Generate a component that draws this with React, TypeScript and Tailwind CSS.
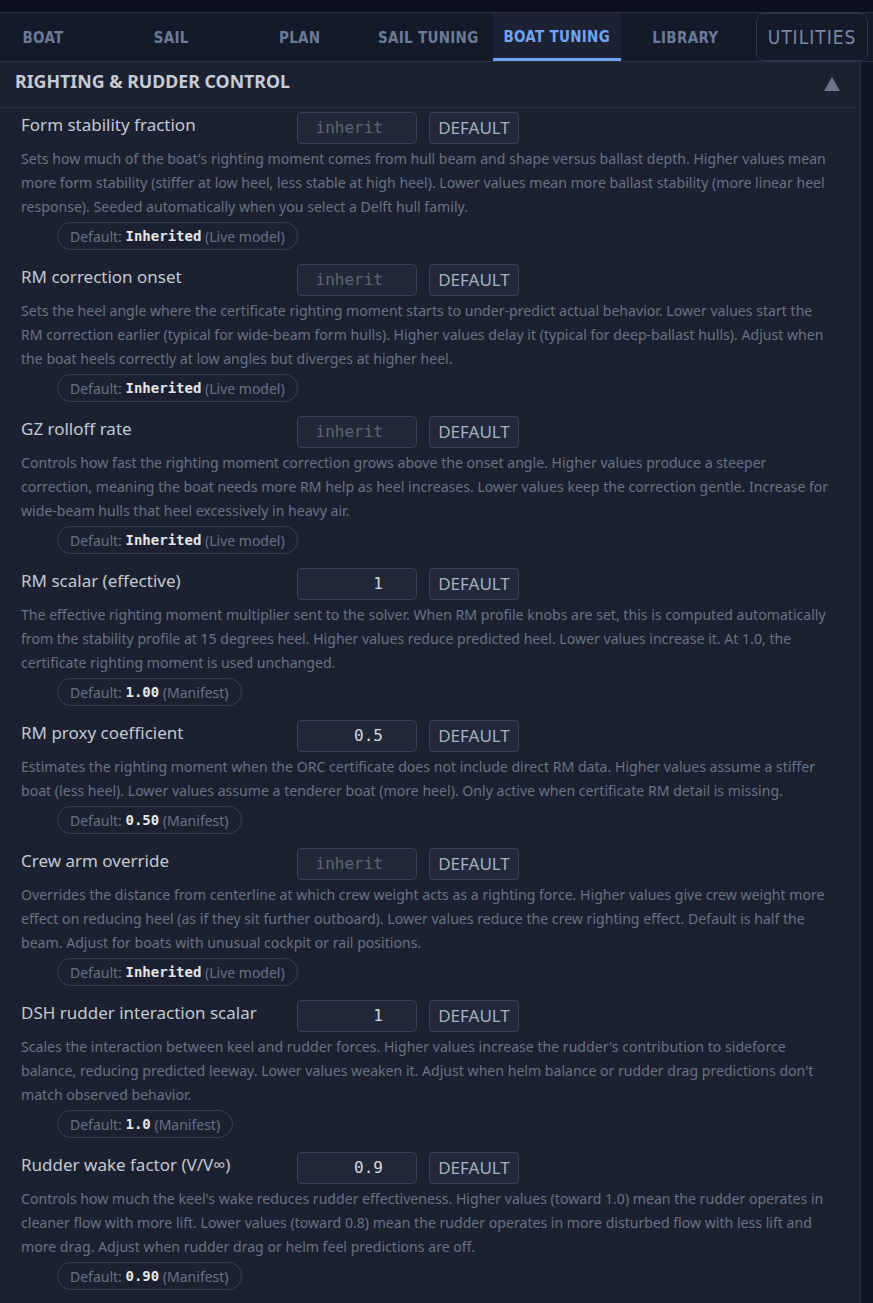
import React from "react";

type Item = {
  label: string;
  value: string;
  placeholder?: boolean;
  desc: string;
  def: string;
  source: string;
};

const items: Item[] = [
  {
    label: "Form stability fraction",
    value: "inherit",
    placeholder: true,
    desc: "Sets how much of the boat's righting moment comes from hull beam and shape versus ballast depth. Higher values mean more form stability (stiffer at low heel, less stable at high heel). Lower values mean more ballast stability (more linear heel response). Seeded automatically when you select a Delft hull family.",
    def: "Inherited",
    source: "(Live model)",
  },
  {
    label: "RM correction onset",
    value: "inherit",
    placeholder: true,
    desc: "Sets the heel angle where the certificate righting moment starts to under-predict actual behavior. Lower values start the RM correction earlier (typical for wide-beam form hulls). Higher values delay it (typical for deep-ballast hulls). Adjust when the boat heels correctly at low angles but diverges at higher heel.",
    def: "Inherited",
    source: "(Live model)",
  },
  {
    label: "GZ rolloff rate",
    value: "inherit",
    placeholder: true,
    desc: "Controls how fast the righting moment correction grows above the onset angle. Higher values produce a steeper correction, meaning the boat needs more RM help as heel increases. Lower values keep the correction gentle. Increase for wide-beam hulls that heel excessively in heavy air.",
    def: "Inherited",
    source: "(Live model)",
  },
  {
    label: "RM scalar (effective)",
    value: "1",
    desc: "The effective righting moment multiplier sent to the solver. When RM profile knobs are set, this is computed automatically from the stability profile at 15 degrees heel. Higher values reduce predicted heel. Lower values increase it. At 1.0, the certificate righting moment is used unchanged.",
    def: "1.00",
    source: "(Manifest)",
  },
  {
    label: "RM proxy coefficient",
    value: "0.5",
    desc: "Estimates the righting moment when the ORC certificate does not include direct RM data. Higher values assume a stiffer boat (less heel). Lower values assume a tenderer boat (more heel). Only active when certificate RM detail is missing.",
    def: "0.50",
    source: "(Manifest)",
  },
  {
    label: "Crew arm override",
    value: "inherit",
    placeholder: true,
    desc: "Overrides the distance from centerline at which crew weight acts as a righting force. Higher values give crew weight more effect on reducing heel (as if they sit further outboard). Lower values reduce the crew righting effect. Default is half the beam. Adjust for boats with unusual cockpit or rail positions.",
    def: "Inherited",
    source: "(Live model)",
  },
  {
    label: "DSH rudder interaction scalar",
    value: "1",
    desc: "Scales the interaction between keel and rudder forces. Higher values increase the rudder's contribution to sideforce balance, reducing predicted leeway. Lower values weaken it. Adjust when helm balance or rudder drag predictions don't match observed behavior.",
    def: "1.0",
    source: "(Manifest)",
  },
  {
    label: "Rudder wake factor (V/V∞)",
    value: "0.9",
    desc: "Controls how much the keel's wake reduces rudder effectiveness. Higher values (toward 1.0) mean the rudder operates in cleaner flow with more lift. Lower values (toward 0.8) mean the rudder operates in more disturbed flow with less lift and more drag. Adjust when rudder drag or helm feel predictions are off.",
    def: "0.90",
    source: "(Manifest)",
  },
];

const tabs = ["BOAT", "SAIL", "PLAN", "SAIL TUNING", "BOAT TUNING", "LIBRARY"];

const sans = "font-['Noto_Sans','Open_Sans',sans-serif]";
const mono = "font-['DejaVu_Sans_Mono','Liberation_Mono',monospace]";
const cond = "font-['DejaVu_Sans_Condensed','Roboto',sans-serif]";

function Setting({ item }: { item: Item }) {
  return (
    <div className="pl-[21px] pr-[29px] mb-[14px]">
      {/* 标签 + 输入 */}
      <div className="flex items-center h-[32px]">
        <div className="w-[276px] text-[17px] text-[#c3c8d2] -mt-[6px] whitespace-nowrap">{item.label}</div>
        <div
          className={`w-[120px] h-[32px] rounded-[4px] border border-[#394154] bg-[#212838] flex items-center justify-end pr-[33px] text-[16px] ${mono} ${
            item.placeholder ? "text-[#5d6679]" : "text-[#d5d9e0]"
          }`}
        >
          {item.value}
        </div>
        <button className="ml-[12px] w-[90px] h-[32px] rounded-[4px] border border-[#394154] bg-[#222939] text-[17px] text-[#a7b0c1] flex items-center justify-center">
          DEFAULT
        </button>
      </div>

      {/* 说明 */}
      <p className="mt-[3px] text-[14.1px] leading-[24px] text-[#697285]">{item.desc}</p>

      {/* 默认值 */}
      <div className="mt-[3px] ml-[36px] inline-flex items-center h-[28px] px-[12px] rounded-full border border-[#353d4f] text-[14px] text-[#697285]">
        Default:&nbsp;<span className={`${mono} font-semibold text-[14px] text-[#e3e6eb]`}>{item.def}</span>&nbsp;{item.source}
      </div>
    </div>
  );
}

export default function App() {
  return (
    <div className={`min-h-screen bg-[#0b0f1e] ${sans}`}>
      <div className="h-[12px] bg-[#0b0f1e]" />

      {/* 标签栏 */}
      <div className="flex h-[50px] border-t border-b border-[#2c3345] bg-[#131a2a]">
        {tabs.map((t, i) => {
          const active = t === "BOAT TUNING";
          return (
            <div
              key={t}
              className={`${i === 0 ? "w-[107px] pr-[21px]" : "w-[128.5px]"} h-full flex items-center justify-center text-[15px] font-bold tracking-[0.3px] ${cond} ${
                active
                  ? "bg-[#1c2233] text-[#6fa3f3] border-b-[3px] border-[#6fa3f3] pt-[4px]"
                  : "text-[#6b7a95] pt-[2px]"
              }`}
            >
              {t}
            </div>
          );
        })}
        <div className="flex-1 flex justify-end pr-[5px]">
          <div className={`w-[112px] h-[48px] rounded-[8px] border border-[#2f3648] flex items-center justify-center text-[19px] tracking-[1px] text-[#7a88a2] ${cond}`}>
            UTILITIES
          </div>
        </div>
      </div>

      <div className="flex">
        <div className="w-[861px] bg-[#1b2130] border-r border-[#2a3142] pb-[40px]">
          {/* 面板标题 */}
          <div className="h-[46px] flex items-center justify-between pl-[15px] pr-[20px] pb-[6px] border-b border-[#252c3c]">
            <span className="text-[17.8px] font-bold text-[#c6cbd5]">RIGHTING &amp; RUDDER CONTROL</span>
            <svg width="16" height="14" viewBox="0 0 16 14" className="mt-[4px]">
              <path d="M8 0 L16 14 L0 14 Z" fill="#6b7486" />
            </svg>
          </div>
          <div className="pt-[4px]">
            {items.map((it) => (
              <Setting key={it.label} item={it} />
            ))}
          </div>
        </div>
        <div className="flex-1 bg-[#111627]" />
      </div>
    </div>
  );
}
